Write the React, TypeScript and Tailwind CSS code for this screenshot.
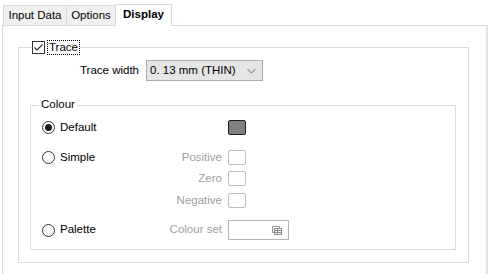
import React from "react";

const font = { fontFamily: '"Liberation Sans", Arial, sans-serif' };

const Radio: React.FC<{ checked?: boolean; label: string }> = ({ checked, label }) => (
  <div className="flex items-center w-[120px]">
    <span className="flex items-center justify-center w-[13px] h-[13px] rounded-full border border-[#333333] bg-white">
      {checked && <span className="w-[7px] h-[7px] rounded-full bg-[#1a1a1a]" />}
    </span>
    <span className="ml-[5px] text-[#000000]">{label}</span>
  </div>
);

const Swatch: React.FC<{ label?: string; filled?: boolean }> = ({ label, filled }) => (
  <div className="flex items-center">
    <span className="w-[60px] text-right text-[#a0a0a0]">{label}</span>
    <span
      className={
        filled
          ? "ml-[6px] w-[18px] h-[15px] rounded-[2px] border border-[#1e1e1e] bg-[#808080]"
          : "ml-[6px] w-[18px] h-[15px] rounded-[2px] border border-[#bdbdbd] bg-white"
      }
    />
  </div>
);

const ListIcon = () => (
  <svg width="10" height="9" viewBox="0 0 10 9" shapeRendering="crispEdges">
    <rect x="0.5" y="0.5" width="7" height="6" fill="none" stroke="#9a9a9a" />
    <rect x="2.5" y="2.5" width="7" height="6" fill="#ffffff" stroke="#8a8a8a" />
    <line x1="3" y1="4.5" x2="9" y2="4.5" stroke="#8a8a8a" />
    <line x1="3" y1="6.5" x2="9" y2="6.5" stroke="#8a8a8a" />
    <line x1="5.5" y1="3" x2="5.5" y2="8" stroke="#8a8a8a" />
  </svg>
);

export default function App() {
  return (
    <div className="w-[494px] h-[274px] bg-white overflow-hidden text-[11.5px] leading-none text-black" style={font}>
      {/* tabs */}
      <div className="flex items-end h-[25px] pl-[3px]">
        <div className="h-[20px] w-[64px] flex items-center justify-center bg-[#f0f0f0] border border-b-0 border-[#d9d9d9]">
          Input Data
        </div>
        <div className="h-[20px] w-[49px] flex items-center justify-center bg-[#f0f0f0] border border-b-0 border-l-0 border-[#d9d9d9]">
          Options
        </div>
        <div className="h-[22px] w-[57px] flex items-center justify-center bg-white border border-b-0 border-[#d9d9d9] -ml-[1px] -mb-[1px] relative font-bold pb-[2px]">
          Display
        </div>
      </div>

      {/* panel */}
      <div className="ml-[2px] w-[486px] h-[260px] border border-[#d9d9d9] border-r-2 border-r-[#e3e3e3] pt-[14px] pl-[15px]">
        <fieldset className="w-[451px] h-[223px] border border-[#dcdcdc] px-0">
          <legend className="ml-[13px] flex items-center h-[15px]">
            <span className="flex items-center justify-center w-[13px] h-[13px] border border-[#333333] bg-white">
              <svg width="11" height="11" viewBox="0 0 11 11">
                <path d="M1.5 5.5 L4 8 L9.5 2.5" fill="none" stroke="#333333" strokeWidth="1.2" />
              </svg>
            </span>
            <span className="ml-[2px] px-[1px] h-[15px] flex items-center border border-dotted border-[#000000]">Trace</span>
          </legend>

          <div className="flex items-center mt-[5px]">
            <span className="w-[120px] text-right">Trace width</span>
            <div className="ml-[7px] w-[117px] h-[21px] bg-[#e5e5e5] border border-[#adadad] flex items-center justify-between pl-[3px] pr-[6px]">
              <span>0. 13 mm (THIN)</span>
              <svg width="9" height="6" viewBox="0 0 9 6">
                <path d="M0.5 1 L4.5 5 L8.5 1" fill="none" stroke="#606060" strokeWidth="1" />
              </svg>
            </div>
          </div>

          <fieldset className="ml-[11px] mt-[17px] w-[426px] h-[152px] border border-[#dcdcdc] px-0">
            <legend className="ml-[8px] px-[2px] h-[14px] flex items-center">Colour</legend>
            <div className="pl-[11px] flex flex-col">
              <div className="flex items-center h-[15px] mt-[8px]">
                <Radio checked label="Default" />
                <Swatch filled />
              </div>
              <div className="flex items-center h-[15px] mt-[15px]">
                <Radio label="Simple" />
                <Swatch label="Positive" />
              </div>
              <div className="flex items-center h-[15px] mt-[6px]">
                <div className="w-[120px]" />
                <Swatch label="Zero" />
              </div>
              <div className="flex items-center h-[15px] mt-[7px]">
                <div className="w-[120px]" />
                <Swatch label="Negative" />
              </div>
              <div className="flex items-center h-[20px] mt-[12px]">
                <Radio label="Palette" />
                <span className="w-[60px] text-right text-[#a0a0a0]">Colour set</span>
                <div className="ml-[6px] w-[61px] h-[20px] border border-[#b4b4b4] bg-white flex items-center justify-end pr-[6px]">
                  <ListIcon />
                </div>
              </div>
            </div>
          </fieldset>
        </fieldset>
      </div>
    </div>
  );
}
